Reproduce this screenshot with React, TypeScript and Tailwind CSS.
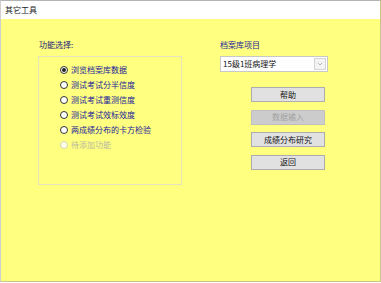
import { ChevronDown } from 'lucide-react';

const font = { fontFamily: '"Noto Sans CJK SC", "Noto Sans", sans-serif' };

const options = [
  { label: '浏览档案库数据', checked: true },
  { label: '测试考试分半信度' },
  { label: '测试考试重测信度' },
  { label: '测试考试效标效度' },
  { label: '两成绩分布的卡方检验' },
  { label: '待添加功能', disabled: true },
];

function Radio({ label, checked, disabled }: { label: string; checked?: boolean; disabled?: boolean }) {
  return (
    <div className="h-[15px] flex items-center gap-[3px]">
      <span
        className={
          disabled
            ? 'w-[8px] h-[8px] rounded-full border border-[#d6d6b4] bg-[#fdfde8]'
            : 'w-[8px] h-[8px] rounded-full border border-[#333333] bg-white flex items-center justify-center'
        }
      >
        {checked && <span className="w-[4px] h-[4px] rounded-full bg-[#222222]" />}
      </span>
      <span className={disabled ? 'text-[#b8b8a0]' : 'text-[#1a1a9a]'}>{label}</span>
    </div>
  );
}

function Button({ children, disabled }: { children: string; disabled?: boolean }) {
  return (
    <div
      className={
        disabled
          ? 'w-[74px] h-[15px] flex items-center justify-center border border-[#bfbfbf] bg-[#cccccc] text-[#a2a2a2]'
          : 'w-[74px] h-[15px] flex items-center justify-center border border-[#adadad] bg-[#e1e1e1] text-[#111111]'
      }
    >
      {children}
    </div>
  );
}

export default function App() {
  return (
    <div className="w-[381px] h-[283px] bg-white text-[8px] leading-[10px]" style={font}>
      <div className="w-[381px] h-[282px] flex flex-col border-t border-l border-t-[#b4b4b4] border-l-[#cfcfcf] border-r border-b border-r-[#c9c68a] border-b-[#c9c68a]">
        {/* Title bar */}
        <div className="h-[18px] bg-white flex items-center px-[4px] text-[#222222]">其它工具</div>

        {/* Body */}
        <div className="flex-1 bg-[#ffff80] flex pl-[37px] pt-[21px]">
          {/* Left column */}
          <div className="flex flex-col">
            <div className="text-[#1a1a7a] pl-[1px]">功能选择:</div>
            <div className="mt-[6px] w-[144px] h-[129px] border border-[#e6e4bc] pl-[21px] pt-[5px] flex flex-col">
              {options.map((o) => (
                <Radio key={o.label} {...o} />
              ))}
            </div>
          </div>

          {/* Right column */}
          <div className="ml-[38px] flex flex-col">
            <div className="text-[#1a1a9a]">档案库项目</div>
            <div className="mt-[6px] w-[108px] h-[16px] bg-white border border-[#c8c8c8] flex items-center justify-between pl-[2px] pr-[1px] text-[#111111]">
              <span>15级1班病理学</span>
              <span className="w-[12px] h-[12px] border border-[#d4d4d4] bg-[#f4f4f4] flex items-center justify-center">
                <ChevronDown className="w-[8px] h-[8px] text-[#777777]" strokeWidth={1.5} />
              </span>
            </div>
            <div className="mt-[15px] ml-[31px] flex flex-col gap-[7.5px]">
              <Button>帮助</Button>
              <Button disabled>数据输入</Button>
              <Button>成绩分布研究</Button>
              <Button>返回</Button>
            </div>
          </div>
        </div>
      </div>
    </div>
  );
}
